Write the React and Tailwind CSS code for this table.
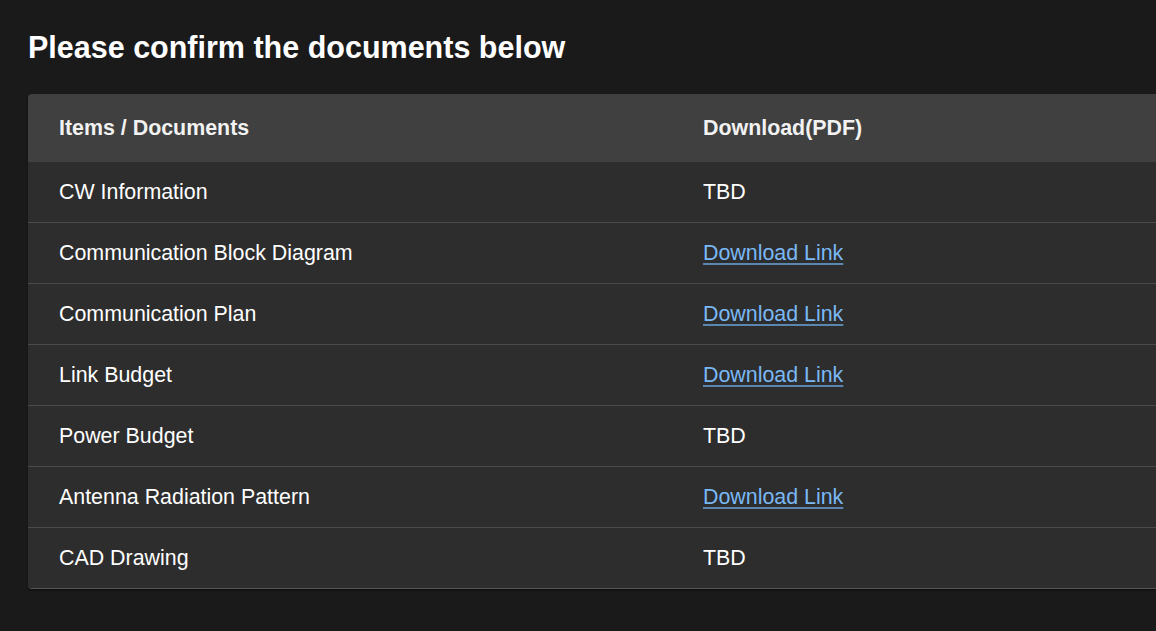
const docs = [
  { name: 'CW Information', link: false },
  { name: 'Communication Block Diagram', link: true },
  { name: 'Communication Plan', link: true },
  { name: 'Link Budget', link: true },
  { name: 'Power Budget', link: false },
  { name: 'Antenna Radiation Pattern', link: true },
  { name: 'CAD Drawing', link: false },
];

export default function App() {
  return (
    <div className="min-h-[631px] w-full overflow-hidden bg-[#1a1a1a] pl-[28px] pt-[28px] font-[family-name:'Liberation_Sans',Arial,sans-serif] text-white">
      <h1 className="text-[30.5px] font-bold leading-[38px]">Please confirm the documents below</h1>
      <div className="mt-[28px] w-[1288px] overflow-hidden rounded-[4px] border-b border-[#555] shadow-[0_1px_2px_rgba(0,0,0,0.6)]">
        <div className="flex h-[68px] items-center bg-[#404040] text-[21.4px] font-bold text-[#f2f2f2]">
          <div className="w-1/2 px-[31px]">Items / Documents</div>
          <div className="w-1/2 px-[31px]">Download(PDF)</div>
        </div>
        {docs.map((d, i) => (
          <div
            key={d.name}
            className={'flex items-center bg-[#2d2d2d] text-[21.4px] ' + (i > 0 ? 'h-[61px] border-t border-[#4a4a4a]' : 'h-[60px]')}
          >
            <div className="w-1/2 px-[31px]">{d.name}</div>
            <div className="w-1/2 px-[31px]">
              {d.link ? (
                <a href="#" className="text-[#7ab8f5] underline decoration-[#5b86b0] underline-offset-[3px]">Download Link</a>
              ) : (
                'TBD'
              )}
            </div>
          </div>
        ))}
      </div>
    </div>
  );
}
